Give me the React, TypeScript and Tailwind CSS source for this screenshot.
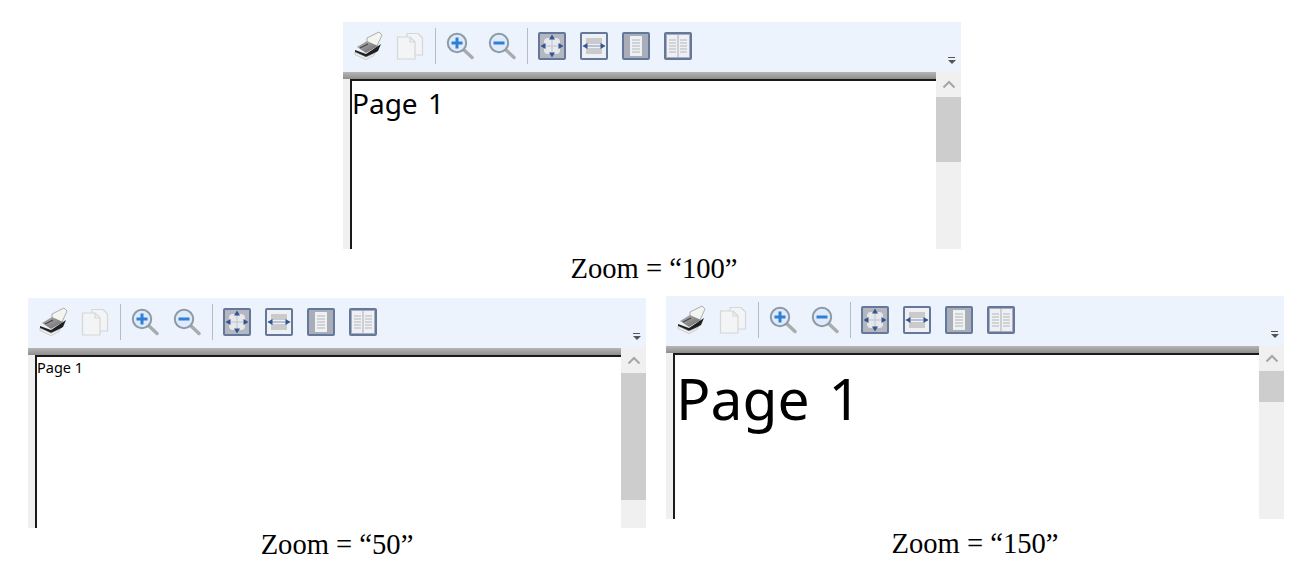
// App.tsx
const PrinterIcon = () => (
  <svg width="30" height="30" viewBox="0 0 30 30" className="shrink-0">
    <defs>
      <linearGradient id="printerTop" x1="0" y1="0" x2="1" y2="1">
        <stop offset="0" stopColor="#b0b0b0" />
        <stop offset="1" stopColor="#6a6a6a" />
      </linearGradient>
    </defs>
    <path d="M14 7 L26 1 L29 4 L23 17 L14 14 Z" fill="#f4f4f1" stroke="#9a9a9a" strokeWidth="0.8" />
    <path d="M2 19 L13 23 L28 13 L25 20 L13 27 L2 22 Z" fill="#1f1f1f" />
    <path d="M4 16 L14 10 L25 15 L13 22 Z" fill="url(#printerTop)" />
    <path d="M2 21 L13 26 L22 22 L21 24.5 L13 28.5 L2 23.5 Z" fill="#f2f2f2" stroke="#a0a0a0" strokeWidth="0.5" />
    <path d="M7 17 L15 13" stroke="#333" strokeWidth="1" />
  </svg>
);

const CopyIcon = () => (
  <svg width="28" height="28" viewBox="0 0 28 28" fill="#f3f4f5" stroke="#d4d6d8" strokeWidth="1.2" strokeLinejoin="round" className="shrink-0">
    <path d="M11 1.5 H22 L26.5 6 V23 H11 Z" />
    <path d="M1.5 5 H14 L19 10 V27 H1.5 Z" />
    <path d="M14 5 V10 H19" fill="none" />
  </svg>
);

const MagnifierIcon = ({ plus }: { plus?: boolean }) => (
  <svg width="28" height="28" viewBox="0 0 28 28" className="shrink-0">
    <path d="M17 17 L26 25.5" stroke="#a8acae" strokeWidth="3.4" strokeLinecap="round" />
    <circle cx="11" cy="11" r="9.2" fill="#dfeafa" stroke="#8c9aa6" strokeWidth="2" />
    <path d="M5.5 11 H16.5" stroke="#2f7fd6" strokeWidth="3" />
    {plus && <path d="M11 5.5 V16.5" stroke="#2f7fd6" strokeWidth="3" />}
  </svg>
);

const FrameIcon = ({ children, bg }: { children: React.ReactNode; bg: string }) => (
  <svg width="28" height="28" viewBox="0 0 28 28" className="shrink-0">
    <rect x="1" y="1" width="26" height="26" rx="1" fill={bg} stroke="#64789c" strokeWidth="2" />
    {children}
  </svg>
);

const FitAllIcon = () => (
  <FrameIcon bg="#b4b7c0">
    <rect x="6" y="6" width="16" height="16" rx="4" fill="#e6e8ec" />
    <path d="M14 4 V24 M4 14 H24" stroke="#b9c4d6" strokeWidth="1" />
    <path d="M14 2.5 L11 7.5 H17 Z M14 25.5 L11 20.5 H17 Z M2.5 14 L7.5 11 V17 Z M25.5 14 L20.5 11 V17 Z" fill="#34558f" />
  </FrameIcon>
);

const FitWidthIcon = () => (
  <FrameIcon bg="#eef0f3">
    <rect x="6" y="6" width="16" height="6" fill="#c8cacd" />
    <rect x="6" y="16" width="16" height="6" fill="#c8cacd" />
    <path d="M3 14 H25" stroke="#7f92b2" strokeWidth="1" />
    <path d="M2.5 14 L7.5 11 V17 Z M25.5 14 L20.5 11 V17 Z" fill="#34558f" />
  </FrameIcon>
);

const SinglePageIcon = () => (
  <FrameIcon bg="#a9adb8">
    <rect x="8" y="4" width="12" height="20" fill="#eef0f3" />
    <path d="M10 8 H18 M10 11 H18 M10 14 H18 M10 17 H18 M10 20 H18" stroke="#c8cacd" strokeWidth="1.6" />
  </FrameIcon>
);

const TwoPagesIcon = () => (
  <FrameIcon bg="#a9adb8">
    <rect x="3" y="3" width="10.5" height="22" fill="#eef0f3" />
    <rect x="14.5" y="3" width="10.5" height="22" fill="#eef0f3" />
    <path d="M5 8 H12 M5 11 H12 M5 14 H12 M5 17 H12 M5 20 H12 M16 8 H23 M16 11 H23 M16 14 H23 M16 17 H23 M16 20 H23" stroke="#c8cacd" strokeWidth="1.6" />
  </FrameIcon>
);

type PreviewProps = {
  height: string;
  pageClass: string;
  thumb: string;
};

const PrintPreview = ({ height, pageClass, thumb }: PreviewProps) => (
  <div className={`flex w-[618px] flex-col overflow-hidden bg-[#f0f0f0] ${height}`}>
    <div className="flex h-[50px] shrink-0 items-center rounded-br-md rounded-tl-sm bg-[#edf3fc]">
      <div className="-mt-[3px] ml-[10px] flex items-center blur-[0.4px]">
        <PrinterIcon />
        <div className="ml-[13px]"><CopyIcon /></div>
        <div className="ml-[11px] h-[36px] w-px bg-[#b4bcc4]" />
        <div className="ml-[10px]"><MagnifierIcon plus /></div>
        <div className="ml-[14px]"><MagnifierIcon /></div>
        <div className="ml-[11px] h-[36px] w-px bg-[#b4bcc4]" />
        <div className="ml-[10px] flex gap-[14px]">
          <FitAllIcon />
          <FitWidthIcon />
          <SinglePageIcon />
          <TwoPagesIcon />
        </div>
      </div>
      <div className="ml-auto mr-[5px] mt-[27px] flex w-[9px] flex-col items-center gap-[2px]">
        <div className="h-px w-[7px] bg-[#555]" />
        <div className="h-0 w-0 border-x-[4px] border-t-[4px] border-x-transparent border-t-[#555]" />
      </div>
    </div>
    <div className="flex min-h-0 flex-1">
      <div className="flex min-w-0 flex-1 flex-col">
        <div className="h-[7px] shrink-0 bg-gradient-to-b from-[#b6b6b6] to-[#8e8e8e]" />
        <div className="ml-[7px] min-h-0 flex-1 overflow-hidden border-l-2 border-t-2 border-[#1a1a1a] bg-white">
          <div className={`font-['Noto_Sans',sans-serif] text-black ${pageClass}`}>Page 1</div>
        </div>
      </div>
      <div className="flex w-[25px] shrink-0 flex-col bg-[#f0f0f0]">
        <div className="flex h-[25px] shrink-0 items-center justify-center">
          <svg width="14" height="9" viewBox="0 0 14 9" fill="none" stroke="#a6a6a6" strokeWidth="2">
            <path d="M1.5 7.5 L7 2 L12.5 7.5" />
          </svg>
        </div>
        <div className={`shrink-0 bg-[#cdcdcd] ${thumb}`} />
      </div>
    </div>
  </div>
);

const Caption = ({ children, className }: { children: React.ReactNode; className?: string }) => (
  <div className={`text-center font-['Liberation_Serif',serif] text-[28.6px] leading-none text-black ${className ?? ''}`}>
    {children}
  </div>
);

const App = () => {
  return (
    <div className="h-[576px] w-[1312px] overflow-hidden bg-white pt-[22px]">
      <div className="pl-[343px]">
        <PrintPreview
          height="h-[227px]"
          thumb="h-[65px]"
          pageClass="pt-[3px] text-[28px] leading-[38px] [word-spacing:3px]"
        />
      </div>
      <Caption className="mt-[6px] h-[27px] pr-[4px]">Zoom = “100”</Caption>
      <div className="mt-[14px] flex items-start gap-[20px] pl-[28px]">
        <div className="mt-[2px]">
          <PrintPreview height="h-[230px]" thumb="h-[127px]" pageClass="pt-0 text-[14.5px] leading-[20px]" />
          <Caption className="mt-[3px]">Zoom = “50”</Caption>
        </div>
        <div>
          <PrintPreview height="h-[223px]" thumb="h-[31px]" pageClass="pl-[1px] pt-[4px] text-[57px] leading-[78px] [word-spacing:4px]" />
          <Caption className="mt-[11px]">Zoom = “150”</Caption>
        </div>
      </div>
    </div>
  );
};

export default App;
